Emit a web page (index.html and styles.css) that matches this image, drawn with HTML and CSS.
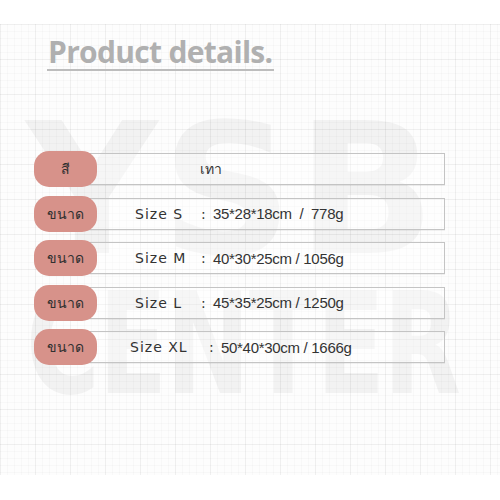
FILE: index.html
```html
<!DOCTYPE html>
<html lang="th">
<head>
<meta charset="utf-8">
<link rel="stylesheet" href="styles.css">
</head>
<body>
<div class="sheet">
  <div class="watermark" aria-hidden="true">
    <span class="wm-top">YSB</span>
    <span class="wm-bottom">CENTER</span>
  </div>
  <div class="title-wrap"><h1 class="title">Product details.</h1></div>
  <div class="rows">
    <div class="row">
      <div class="pill">สี</div>
      <div class="box box-color"><span class="val-thai">เทา</span></div>
    </div>
    <div class="row">
      <div class="pill">ขนาด</div>
      <div class="box"><span class="label">Size S</span><span class="colon">:</span><span class="val">35*28*18cm&nbsp; / &nbsp;778g</span></div>
    </div>
    <div class="row">
      <div class="pill">ขนาด</div>
      <div class="box"><span class="label">Size M</span><span class="colon">:</span><span class="val">40*30*25cm / 1056g</span></div>
    </div>
    <div class="row">
      <div class="pill">ขนาด</div>
      <div class="box"><span class="label">Size L</span><span class="colon">:</span><span class="val">45*35*25cm / 1250g</span></div>
    </div>
    <div class="row">
      <div class="pill">ขนาด</div>
      <div class="box box-xl"><span class="label">Size XL</span><span class="colon">:</span><span class="val">50*40*30cm / 1666g</span></div>
    </div>
  </div>
</div>
</body>
</html>
```
FILE: styles.css
```css
html, body {
  margin: 0;
  padding: 0;
  background: #ffffff;
}
body {
  width: 500px;
  height: 500px;
  overflow: hidden;
  padding-top: 24px;
  box-sizing: border-box;
}
.sheet {
  position: relative;
  height: 451px;
  background-color: #fdfdfd;
  background-image:
    linear-gradient(to right, rgba(0,0,0,0.035) 1px, transparent 1px),
    linear-gradient(to bottom, rgba(0,0,0,0.035) 1px, transparent 1px),
    linear-gradient(to right, rgba(0,0,0,0.018) 1px, transparent 1px),
    linear-gradient(to bottom, rgba(0,0,0,0.018) 1px, transparent 1px);
  background-size: 35px 35px, 35px 35px, 7px 7px, 7px 7px;
  overflow: hidden;
}
.watermark {
  position: absolute;
  left: 26px;
  top: 76px;
  width: 470px;
  display: flex;
  flex-direction: column;
  font-family: "DejaVu Sans", sans-serif;
  font-weight: 900;
  color: rgba(0, 0, 0, 0.045);
  line-height: 1;
  pointer-events: none;
}
.wm-top {
  font-size: 182px;
  letter-spacing: 4px;
  line-height: 180px;
}
.wm-bottom {
  font-size: 140px;
  line-height: 130px;
  letter-spacing: -2px;
  transform: scaleX(0.72);
  transform-origin: left center;
}
.title-wrap {
  position: relative;
  padding: 11px 0 0 47px;
}
.title {
  display: inline-block;
  margin: 0;
  font-family: "Open Sans", "Noto Sans", sans-serif;
  font-weight: 700;
  font-size: 30px;
  line-height: 34px;
  letter-spacing: -0.7px;
  color: #b0b0b0;
  padding: 0 2px 0 1px;
  border-bottom: 2px solid #bdbdbd;
}
.rows {
  position: relative;
  margin-top: 80px;
  padding-left: 34px;
  display: flex;
  flex-direction: column;
  gap: 8.5px;
}
.row {
  display: flex;
  align-items: center;
  width: 411px;
  height: 36px;
}
.pill {
  position: relative;
  z-index: 1;
  flex: 0 0 63px;
  height: 36px;
  border-radius: 15px;
  background: #d7928a;
  color: #303030;
  font-family: "DejaVu Sans", "Noto Sans", sans-serif;
  font-size: 14px;
  display: flex;
  align-items: center;
  justify-content: center;
}
.box {
  flex: 1;
  margin-left: -20px;
  height: 32px;
  box-sizing: border-box;
  border: 1.5px solid #c4c4c4;
  box-shadow: 0 1px 0 rgba(0, 0, 0, 0.05);
  background: rgba(255, 255, 255, 0.35);
  display: grid;
  grid-template-columns: 66px 12px auto;
  align-items: center;
  padding-left: 57px;
  color: #333;
}
.box-color {
  display: flex;
  padding-left: 122px;
}
.box-xl {
  padding-left: 52px;
  grid-template-columns: 79px 12px auto;
}
.label {
  font-family: "DejaVu Sans", sans-serif;
  font-size: 14px;
  letter-spacing: 1px;
  color: #333;
}
.colon {
  font-family: "DejaVu Sans", sans-serif;
  font-size: 14px;
}
.val {
  font-family: "Liberation Sans", sans-serif;
  font-size: 15px;
  letter-spacing: -0.3px;
  color: #333;
}
.val-thai {
  font-family: "DejaVu Sans", "Noto Sans", sans-serif;
  font-size: 14px;
  color: #333;
}
```
